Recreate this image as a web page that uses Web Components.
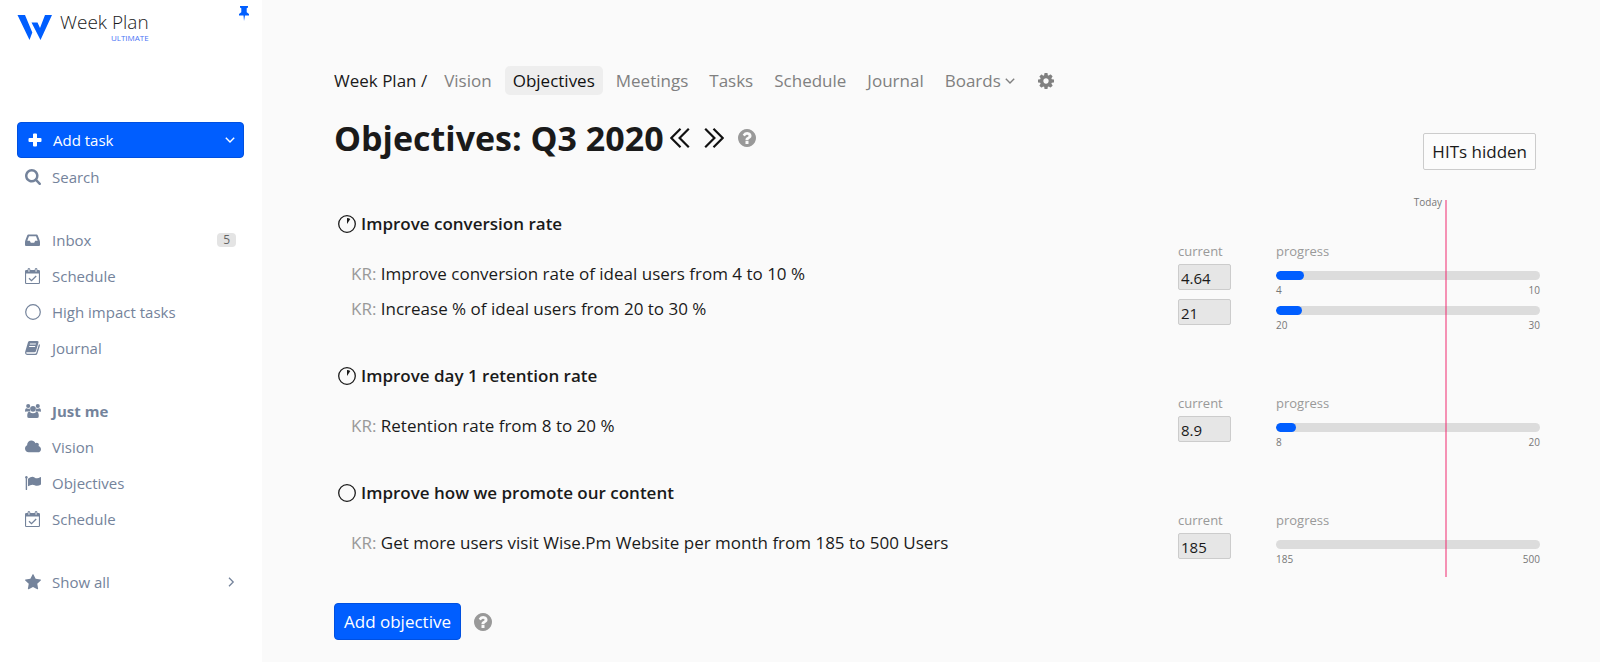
<!DOCTYPE html>
<html lang="en">
<head>
<meta charset="utf-8">
<meta name="viewport" content="width=device-width, initial-scale=1">
<title>Objectives - Week Plan</title>
<style>
body {
  margin: 0;
  min-height: 100vh;
  display: flex;
  background: #fafafa;
  color: #1a1a1a;
  font-family: "Open Sans", "Noto Sans", sans-serif;
  font-size: 17px;
  --blue: #005eff;
  --slate: #74839b;
  --muted: #999;
}
plan-board {
  flex: 1;
  min-width: 0;
}
</style>
</head>
<body>
<plan-sidebar></plan-sidebar>
<plan-board></plan-board>

<script>
const icons = {
  logo: ['0 0 34 25', '<path d="M0 0h7.500l7.300 17.500L12 25zM14 7.500h6l2.500 5.500L27.500 0h7L23 25z"/>'],
  pin: ['0 0 10 15', '<path d="M1 0h8v1.500L7.700 2.300v4L10 8v1.600H6L5 15 4.500 9.600H0V8l2.300-1.700v-4L1 1.500z"/>'],
  plus: ['0 0 14 14', '<path d="M5 1.500q0-1 1-1h2q1 0 1 1V5h3.500q1 0 1 1v2q0 1-1 1H9v3.500q0 1-1 1H6q-1 0-1-1V9H1.500q-1 0-1-1V6q0-1 1-1H5z"/>'],
  down: ['0 0 10 10', '<path d="M.8 2.800 5 7l4.200-4.200" fill="none" stroke="currentColor" stroke-width="1.400"/>'],
  right: ['0 0 10 10', '<path d="M3 .8 7.200 5 3 9.200" fill="none" stroke="currentColor" stroke-width="1.300"/>'],
  prev: ['0 0 20 20', '<path d="M10.500.8 1.300 10l9.200 9.200M18.800.8 9.600 10l9.200 9.200" fill="none" stroke="currentColor" stroke-width="2.200"/>'],
  next: ['0 0 20 20', '<path d="M1.200.8l9.200 9.200-9.200 9.200M9.500.8l9.200 9.200-9.200 9.200" fill="none" stroke="currentColor" stroke-width="2.200"/>'],
  search: ['64 128 1664 1664', '<path d="M1216 832q0-185-131.500-316.500t-316.500-131.500-316.500 131.500-131.500 316.500 131.500 316.500 316.500 131.500 316.500-131.500 131.500-316.500zm512 832q0 52-38 90t-90 38q-54 0-90-38l-343-342q-179 124-399 124-143 0-273.500-55.500t-225-150-150-225-55.500-273.500 55.500-273.500 150-225 225-150 273.500-55.500 273.500 55.500 225 150 150 225 55.500 273.500q0 220-124 399l343 343q37 37 37 90z"/>'],
  inbox: ['0 0 16 16', '<path fill-rule="evenodd" d="M3.400 2.500h8.200q.8 0 1.100.8l1.900 5q.4 1 .4 2V13q0 1-1 1H1q-1 0-1-1v-2.700q0-1 .4-2l1.900-5q.3-.8 1.100-.8zM4 4.200 2.300 8.800h2.500l1 2h3.400l1-2h2.500L11 4.200z"/>'],
  calendar: ['0 0 16 16', '<path fill-rule="evenodd" d="M1.200 2h1.300q0-2 1.400-2t1.500 2h4.200q0-2 1.500-2t1.400 2h1.300Q15 2 15 3.200v11.600q0 1.200-1.200 1.200H1.200Q0 16 0 14.800V3.200Q0 2 1.200 2zM1.100 5.500v9.400h12.800V5.500zM3.500 1.200v2.600h.9V1.200zm7.100 0v2.600h.9V1.200z"/><path d="m4 10.200 2.500 2.500 4.700-4.700" fill="none" stroke="currentColor" stroke-width="1.300"/>'],
  circle: ['0 0 16 16', '<circle cx="8" cy="8" r="7.300" fill="none" stroke="currentColor" stroke-width="1.200"/>'],
  book: ['0 0 16 16', '<path fill-rule="evenodd" d="M4.600 1h7.800q1.600 0 1.100 1.500L11 11q-.4 1.300-1.700 1.300H2q-1 0-.9.700.2.700 1.300.7H10q1 0 1.300-.9L14 4q1.200.6.900 1.800l-2.500 7.700q-.5 1.500-2 1.500H2.300Q.6 15 .1 13.200 0 12 .4 11L3 2.200Q3.500 1 4.600 1zM5 3.600l-.3.900h6l.3-.9zM4.300 6 4 6.900h6l.3-.9z"/>'],
  users: ['0 0 18 16', '<circle cx="3.600" cy="2.400" r="2.300"/><circle cx="14.400" cy="2.400" r="2.300"/><path d="M0 8.300Q0 5 1.500 5q1.800 1 4 .2-.2 2 .7 3.300H1.500Q0 9 0 8.300zm18 0Q18 5 16.500 5q-1.800 1-4 .2.200 2-.7 3.300h4.700q1.500.5 1.500-.2z"/><circle cx="9" cy="5.600" r="3.200"/><path d="M5 8.800q2 1.700 4 1.700t4-1.700q2.500 0 2.500 5 0 2.200-2.200 2.200H4.700q-2.200 0-2.200-2.200 0-5 2.500-5z"/>'],
  cloud: ['64 256 1920 1280', '<path d="M1984 1152q0 159-112.500 271.500t-271.500 112.500h-1088q-185 0-316.500-131.500t-131.500-316.500q0-132 71-241.500t187-163.500q-2-28-2-43 0-212 150-362t362-150q158 0 286.500 88t187.500 230q70-62 166-62 106 0 181 75t75 181q0 75-41 138 129 30 213 134.500t84 239.500z"/>'],
  flag: ['0 0 16 14', '<path d="M1.400 0a1.300 1.300 0 0 1 .7 2.400V13.500q0 .5-.7.500t-.7-.5V2.400A1.300 1.300 0 0 1 1.400 0zM3 2.700Q7-.5 9.500 1.400t6-.3q.5-.2.500.4v7q-3.500 2.200-6.300.7T3 10.200z"/>'],
  star: ['64 64 1664 1600', '<path d="M1728 647q0 22-26 48l-363 354 86 500q1 7 1 20 0 21-10.500 35.500t-30.500 14.500q-19 0-40-12l-449-236-449 236q-22 12-40 12-21 0-31.500-14.500t-10.500-35.500q0-6 2-20l86-500-364-354q-25-27-25-48 0-37 56-46l502-73 225-455q19-41 49-41t49 41l225 455 502 73q56 9 56 46z"/>'],
  cog: ['128 128 1536 1536', '<path d="M1152 896q0-106-75-181t-181-75-181 75-75 181 75 181 181 75 181-75 75-181zm512-109v222q0 12-8 23t-20 13l-185 28q-19 54-39 91 35 50 107 138 10 12 10 25t-9 23q-27 37-99 108t-94 71q-12 0-26-9l-138-108q-44 23-91 38-16 136-29 186-7 28-36 28h-222q-14 0-24.500-8.500t-11.500-21.500l-28-184q-49-16-90-37l-141 107q-10 9-25 9-14 0-25-11-126-114-165-168-7-10-7-23 0-12 8-23 15-21 51-66.500t54-70.500q-27-50-41-99l-183-27q-13-2-21-12.500t-8-23.500v-222q0-12 8-23t19-13l186-28q14-46 39-92-40-57-107-138-10-12-10-24 0-10 9-23 26-36 98.500-107.500t94.500-71.500q13 0 26 10l138 107q44-23 91-38 16-136 29-186 7-28 36-28h222q14 0 24.500 8.500t11.500 21.500l28 184q49 16 90 37l142-107q9-9 24-9 13 0 25 10 129 119 165 170 7 8 7 22 0 12-8 23-15 21-51 66.500t-54 70.500q26 50 41 98l183 28q13 2 21 12.500t8 23.500z"/>'],
  help: ['128 128 1536 1536', '<path d="M1024 1376v-192q0-14-9-23t-23-9h-192q-14 0-23 9t-9 23v192q0 14 9 23t23 9h192q14 0 23-9t9-23zm256-672q0-88-55.500-163t-138.500-116-170-41q-243 0-371 213-15 24 8 42l132 100q7 6 19 6 16 0 25-12 53-68 86-92 34-24 86-24 48 0 85.500 26t37.500 59q0 38-20 61t-68 45q-63 28-115.500 86.500t-52.500 125.500v36q0 14 9 23t23 9h192q14 0 23-9t9-23q0-19 21.500-49.500t54.500-49.500q32-18 49-28.500t46-35 44.500-48 28-60.500 12.500-81zm384 192q0 209-103 385.500t-279.500 279.500-385.500 103-385.500-103-279.500-279.500-103-385.500 103-385.500 279.500-279.500 385.500-103 385.500 103 279.500 279.500 103 385.500z"/>'],
  clock: ['0 0 18 18', '<circle cx="9" cy="9" r="8.300" fill="none" stroke="currentColor" stroke-width="1.300"/><path d="M9 9V3q1.700 0 3.300 1z"/>'],
  ring: ['0 0 18 18', '<circle cx="9" cy="9" r="8.300" fill="none" stroke="currentColor" stroke-width="1.300"/>']
}

customElements.define('plan-icon', class extends HTMLElement {
  constructor() {
    super()
    this.attachShadow({ mode: 'open' })
  }

  connectedCallback() {
    const [box, shape] = icons[this.getAttribute('name')]
    this.shadowRoot.innerHTML = `
    <style>
    :host { display: inline-flex; flex: none; width: 16px; height: 16px; }
    svg { width: 100%; height: 100%; fill: currentColor; }
    </style>
    <svg viewBox="${box}" aria-hidden="true">${shape}</svg>
    `
  }
})

customElements.define('side-link', class extends HTMLElement {
  constructor() {
    super()
    this.attachShadow({ mode: 'open' }).innerHTML = `
    <style>
    :host { display: block; }
    a {
      display: flex;
      align-items: center;
      height: 36px;
      padding: 0 8px;
      color: var(--slate);
      text-decoration: none;
    }
    .glyph { display: flex; width: 27px; }
    .label { flex: 1; }
    </style>
    <a href="#">
      <span class="glyph"><plan-icon name="${this.getAttribute('icon')}"></plan-icon></span>
      <span class="label"><slot></slot></span>
      <slot name="end"></slot>
    </a>
    `
  }
})

customElements.define('plan-sidebar', class extends HTMLElement {
  constructor() {
    super()
    this.attachShadow({ mode: 'open' }).innerHTML = `
    <style>
    :host {
      display: block;
      flex: none;
      box-sizing: border-box;
      width: 262px;
      padding: 0 18px 24px 17px;
      background: #fff;
      font-size: 15px;
    }
    header {
      display: flex;
      align-items: flex-start;
      height: 122px;
    }
    .logo {
      width: 35px;
      height: 25px;
      margin-top: 15px;
      color: var(--blue);
    }
    .brand {
      margin: 12px 0 0 8px;
      font-size: 19px;
      font-weight: 300;
      line-height: 20px;
      text-align: right;
    }
    .brand small {
      display: block;
      color: #4a74f5;
      font-size: 8px;
      font-weight: 400;
      line-height: 12px;
    }
    button {
      border: 0;
      padding: 0;
      background: none;
      color: inherit;
      font: inherit;
    }
    .pin {
      display: flex;
      margin: 6px -5px 0 auto;
      color: var(--blue);
    }
    .pin plan-icon { width: 10px; height: 15px; }
    .add {
      display: flex;
      box-sizing: border-box;
      height: 36px;
      border: 1px solid #0050e0;
      border-radius: 4px;
      background: var(--blue);
      color: #fff;
    }
    .add button { display: flex; align-items: center; }
    .task { flex: 1; gap: 11px; padding-left: 10px; }
    .task plan-icon { width: 14px; height: 14px; }
    .more { padding: 0 8px; }
    .more plan-icon, .end { width: 10px; height: 10px; }
    nav {
      display: flex;
      flex-direction: column;
      gap: 27px;
      padding-top: 1px;
    }
    .me { font-weight: 700; }
    .count {
      padding: 0 6px;
      border-radius: 4px;
      background: #e4e4e4;
      color: #666;
      font-size: 12px;
      line-height: 14px;
    }
    </style>
    <header>
      <plan-icon class="logo" name="logo"></plan-icon>
      <div class="brand">Week Plan<small>ULTIMATE</small></div>
      <button class="pin" aria-label="Pin sidebar"><plan-icon name="pin"></plan-icon></button>
    </header>
    <div class="add">
      <button class="task"><plan-icon name="plus"></plan-icon>Add task</button>
      <button class="more" aria-label="More ways to add"><plan-icon name="down"></plan-icon></button>
    </div>
    <nav>
      <side-link icon="search">Search</side-link>
      <div>
        <side-link icon="inbox">Inbox<span slot="end" class="count">5</span></side-link>
        <side-link icon="calendar">Schedule</side-link>
        <side-link icon="circle">High impact tasks</side-link>
        <side-link icon="book">Journal</side-link>
      </div>
      <div>
        <side-link icon="users" class="me">Just me</side-link>
        <side-link icon="cloud">Vision</side-link>
        <side-link icon="flag">Objectives</side-link>
        <side-link icon="calendar">Schedule</side-link>
      </div>
      <side-link icon="star">Show all<plan-icon slot="end" class="end" name="right"></plan-icon></side-link>
    </nav>
    `
  }
})

customElements.define('board-nav', class extends HTMLElement {
  constructor() {
    super()
    this.attachShadow({ mode: 'open' }).innerHTML = `
    <style>
    :host { display: block; }
    nav { display: flex; align-items: center; gap: 5px; line-height: 29px; }
    a {
      display: flex;
      align-items: center;
      gap: 4px;
      padding: 0 8px;
      border-radius: 5px;
      color: #808080;
      text-decoration: none;
    }
    .home { padding-left: 0; padding-right: 4px; color: #1a1a1a; }
    .on { background: #eee; color: #111; }
    .arrow { width: 10px; height: 10px; }
    .cog { margin-left: 2px; }
    </style>
    <nav>
      <a class="home" href="#">Week Plan /</a>
      <a href="#">Vision</a>
      <a class="on" href="#" aria-current="page">Objectives</a>
      <a href="#">Meetings</a>
      <a href="#">Tasks</a>
      <a href="#">Schedule</a>
      <a href="#">Journal</a>
      <a href="#">Boards<plan-icon class="arrow" name="down"></plan-icon></a>
      <a class="cog" href="#" aria-label="Settings"><plan-icon name="cog"></plan-icon></a>
    </nav>
    `
  }
})

// One key result: text, current value and how far it is between from and to
customElements.define('key-result', class extends HTMLElement {
  constructor() {
    super()
    this.attachShadow({ mode: 'open' })
  }

  connectedCallback() {
    const from = Number(this.getAttribute('from'))
    const to = Number(this.getAttribute('to'))
    const current = Number(this.getAttribute('current'))
    this.shadowRoot.innerHTML = `
    <style>
    :host {
      display: grid;
      grid-template-columns: var(--columns);
      column-gap: 45px;
      align-items: start;
    }
    .text { padding-left: 17px; line-height: 24px; }
    .text span { color: var(--muted); }
    input {
      box-sizing: border-box;
      width: 100%;
      height: 26px;
      margin-top: 2px;
      padding: 2px 2px 0;
      border: 1px solid #ccc;
      border-radius: 2px;
      background: #e6e6e6;
      color: #1a1a1a;
      font: inherit;
      font-size: 15px;
    }
    progress {
      display: block;
      appearance: none;
      width: 100%;
      height: 9px;
      margin: 9px 0 3px;
      border: 0;
    }
    progress::-webkit-progress-bar { border-radius: 5px; background: #dcdcdc; overflow: hidden; }
    progress::-webkit-progress-value { border-radius: 5px; background: var(--blue); }
    .scale {
      display: flex;
      justify-content: space-between;
      color: #777;
      font-size: 10px;
      line-height: 14px;
    }
    </style>
    <div class="text"><span>KR:</span> <slot></slot></div>
    <input aria-label="current" value="${current}">
    <div>
      <progress aria-label="progress" max="${to - from}" value="${current - from}"></progress>
      <div class="scale"><span>${from}</span><span>${to}</span></div>
    </div>
    `
  }
})

customElements.define('plan-objective', class extends HTMLElement {
  constructor() {
    super()
    this.attachShadow({ mode: 'open' }).innerHTML = `
    <style>
    :host { display: block; }
    h2 {
      display: flex;
      align-items: center;
      gap: 5px;
      margin: 0 0 4px 4px;
      font-size: 17px;
      font-weight: 600;
      line-height: 26px;
    }
    h2 plan-icon { width: 18px; height: 18px; }
    .head {
      display: grid;
      grid-template-columns: var(--columns);
      column-gap: 45px;
      padding-bottom: 1px;
      color: var(--muted);
      font-size: 13px;
      line-height: 20px;
    }
    .head span:first-child { grid-column: 2; }
    </style>
    <h2><plan-icon name="${this.getAttribute('icon')}"></plan-icon>${this.getAttribute('heading')}</h2>
    <div class="head"><span>current</span><span>progress</span></div>
    <slot></slot>
    `
  }
})

customElements.define('plan-board', class extends HTMLElement {
  constructor() {
    super()
    this.attachShadow({ mode: 'open' }).innerHTML = `
    <style>
    :host { display: block; --columns: minmax(0, 1fr) 53px 264px; }
    main { padding: 66px 60px 22px 72px; }
    button { font: inherit; }
    .bare {
      display: flex;
      padding: 0;
      border: 0;
      background: none;
      color: #111;
    }
    .bare plan-icon { width: 20px; height: 20px; }
    .title {
      display: flex;
      align-items: flex-start;
      margin: 18px 4px 41px 0;
    }
    .title .group {
      display: flex;
      align-items: center;
      flex: 1;
      gap: 14px;
    }
    h1 {
      margin: 0 -8px 0 0;
      font-size: 34px;
      line-height: 50px;
    }
    .bare.help { color: var(--muted); }
    .help plan-icon { width: 18px; height: 18px; }
    .hits {
      margin-top: 20px;
      padding: 0 8px;
      border: 1px solid #ccc;
      border-radius: 2px;
      background: #fcfcfc;
      color: #1a1a1a;
      line-height: 35px;
    }
    .list {
      position: relative;
      display: flex;
      flex-direction: column;
      gap: 31px;
    }
    /* the marker crosses every progress bar at the same date */
    .today {
      position: absolute;
      top: -11px;
      bottom: -11px;
      right: 93px;
      padding-right: 3px;
      border-right: 2px solid rgba(240, 40, 110, .5);
      color: #777;
      font-size: 10px;
      line-height: 4px;
    }
    footer {
      display: flex;
      align-items: center;
      gap: 13px;
      margin-top: 37px;
    }
    .primary {
      padding: 0 9px;
      border: 1px solid #0050e0;
      border-radius: 4px;
      background: var(--blue);
      color: #fff;
      line-height: 35px;
    }
    </style>
    <main>
      <board-nav></board-nav>
      <div class="title">
        <div class="group">
          <h1>Objectives: Q3 2020</h1>
          <button class="bare" aria-label="Previous quarter"><plan-icon name="prev"></plan-icon></button>
          <button class="bare" aria-label="Next quarter"><plan-icon name="next"></plan-icon></button>
          <button class="bare help" aria-label="Help"><plan-icon name="help"></plan-icon></button>
        </div>
        <button class="hits">HITs hidden</button>
      </div>
      <div class="list">
        <plan-objective icon="clock" heading="Improve conversion rate">
          <key-result from="4" to="10" current="4.64">Improve conversion rate of ideal users from 4 to 10 %</key-result>
          <key-result from="20" to="30" current="21">Increase % of ideal users from 20 to 30 %</key-result>
        </plan-objective>
        <plan-objective icon="clock" heading="Improve day 1 retention rate">
          <key-result from="8" to="20" current="8.9">Retention rate from 8 to 20 %</key-result>
        </plan-objective>
        <plan-objective icon="ring" heading="Improve how we promote our content">
          <key-result from="185" to="500" current="185">Get more users visit Wise.Pm Website per month from 185 to 500 Users</key-result>
        </plan-objective>
        <div class="today">Today</div>
      </div>
      <footer>
        <button class="primary">Add objective</button>
        <button class="bare help" aria-label="Help"><plan-icon name="help"></plan-icon></button>
      </footer>
    </main>
    `
  }
})
</script>
</body>
</html>
